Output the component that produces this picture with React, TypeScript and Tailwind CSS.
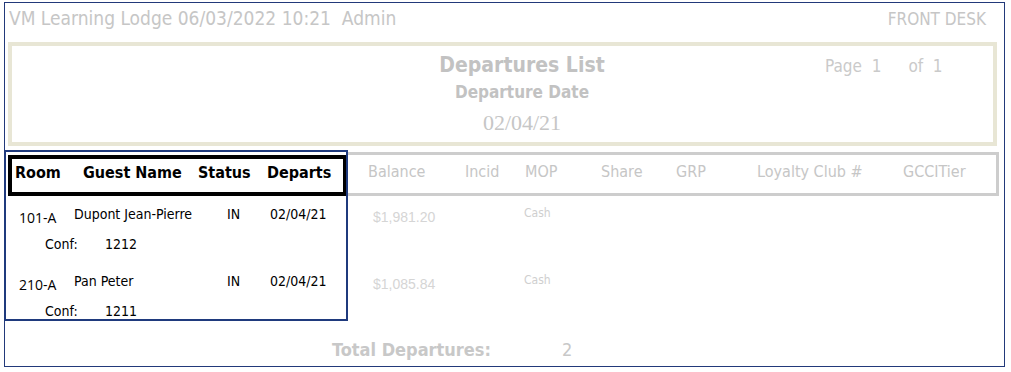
import React from "react";

type Departure = {
  room: string;
  guest: string;
  status: string;
  departs: string;
  balance: string;
  mop: string;
  conf: string;
};

const departures: Departure[] = [
  { room: "101-A", guest: "Dupont Jean-Pierre", status: "IN", departs: "02/04/21", balance: "$1,981.20", mop: "Cash", conf: "1212" },
  { room: "210-A", guest: "Pan Peter", status: "IN", departs: "02/04/21", balance: "$1,085.84", mop: "Cash", conf: "1211" },
];

export default function App() {
  return (
    <div className="relative w-[1011px] h-[372px] bg-white pt-[2px] pl-[4px] font-['DejaVu_Sans_Condensed','DejaVu_Sans',sans-serif]">
      <div className="w-[1001px] h-[365px] border border-[#22397a]">
        {/* top line */}
        <div className="flex justify-between items-start h-[39px] pl-[4px] pr-[18px] pt-[2px] text-[19px] leading-[26px] text-[#c6c6c6]">
          <span>VM Learning Lodge 06/03/2022 10:21&nbsp;&nbsp;Admin</span>
          <span className="text-[17px] pt-[1px]">FRONT DESK</span>
        </div>

        {/* title panel */}
        <div className="ml-[3px] w-[989px] h-[104px] border-4 border-[#e8e6d5] flex">
          <div className="w-[408px]" />
          <div className="w-[204px] flex flex-col items-center pt-[6px]">
            <span className="text-[21px] font-bold text-[#c2c2c2] leading-[26px]">Departures List</span>
            <span className="text-[17px] font-bold text-[#c2c2c2] leading-[22px] mt-[3px]">Departure Date</span>
            <span className="text-[22px] text-[#c6c6c6] leading-[26px] mt-[7px] font-['Liberation_Serif',serif]">02/04/21</span>
          </div>
          <div className="w-[201px]" />
          <div className="flex pt-[8px] text-[17px] text-[#cacaca]">
            <span>Page&nbsp;&nbsp;1</span>
            <span className="ml-[27px]">of&nbsp;&nbsp;1</span>
          </div>
        </div>

        {/* column header */}
        <div className="ml-[3px] mt-[6px] flex items-end h-[44px]">
          <div className="w-[339px] h-[41px] border-4 border-black flex items-center pb-[6px] text-[16px] font-bold text-black pl-[3px]">
            <span className="w-[68px]">Room</span>
            <span className="w-[115px]">Guest Name</span>
            <span className="w-[69px]">Status</span>
            <span>Departs</span>
          </div>
          <div className="w-[652px] h-[44px] border-y-[3px] border-r-[3px] border-[#cdcdcd] flex items-center pb-[5px] text-[16px] text-[#c6c6c6] pl-[21px]">
            <span className="w-[97px]">Balance</span>
            <span className="w-[60px]">Incid</span>
            <span className="w-[76px]">MOP</span>
            <span className="w-[75px]">Share</span>
            <span className="w-[81px]">GRP</span>
            <span className="w-[146px]">Loyalty Club #</span>
            <span>GCCITier</span>
          </div>
        </div>

        {/* rows */}
        <div className="pt-[9px]">
          {departures.map((d) => (
            <div key={d.room} className="h-[67px]">
              <div className="flex items-start h-[30px] text-[14px] text-black">
                <span className="w-[69px] pl-[14px] pt-[4px] text-[14px] font-['Open_Sans',sans-serif] leading-[18px]">{d.room}</span>
                <span className="w-[153px] leading-[18px]">{d.guest}</span>
                <span className="w-[43px] leading-[18px]">{d.status}</span>
                <span className="w-[103px] leading-[18px]">{d.departs}</span>
                <span className="w-[151px] pt-[3px] text-[14px] text-[#d5d5d5] font-['Liberation_Sans',sans-serif] leading-[18px]">{d.balance}</span>
                <span className="text-[12px] text-[#cfcfcf] leading-[16px]">{d.mop}</span>
              </div>
              <div className="flex text-[14px] text-black leading-[18px]">
                <span className="w-[100px] pl-[40px]">Conf:</span>
                <span>{d.conf}</span>
              </div>
            </div>
          ))}
        </div>

        {/* totals */}
        <div className="flex mt-[-3px] text-[18px] text-[#c8c8c8]">
          <span className="ml-[327px] w-[230px] font-bold">Total Departures:</span>
          <span>2</span>
        </div>
      </div>

      {/* selection outline */}
      <div className="absolute left-[4px] top-[150px] w-[344px] h-[171px] border-2 border-[#1f3a7d] pointer-events-none" />
    </div>
  );
}
